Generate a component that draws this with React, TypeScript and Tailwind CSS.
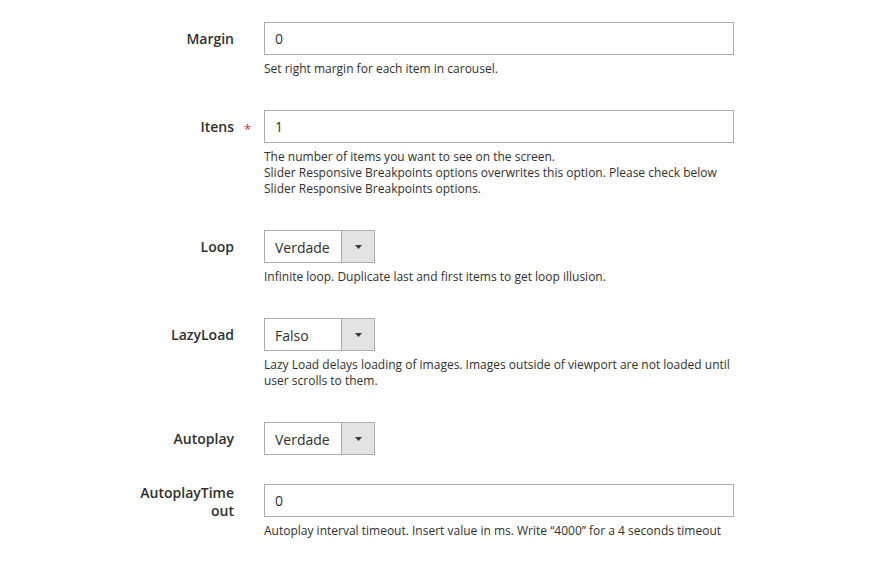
import React from 'react';

type Row = {
  label: string;
  required?: boolean;
  wrapLabel?: boolean;
  kind: 'input' | 'select';
  value: string;
  note?: string[];
};

const rows: Row[] = [
  { label: 'Margin', kind: 'input', value: '0', note: ['Set right margin for each item in carousel.'] },
  {
    label: 'Itens',
    required: true,
    kind: 'input',
    value: '1',
    note: [
      'The number of items you want to see on the screen.',
      'Slider Responsive Breakpoints options overwrites this option. Please check below',
      'Slider Responsive Breakpoints options.',
    ],
  },
  { label: 'Loop', kind: 'select', value: 'Verdade', note: ['Infinite loop. Duplicate last and first items to get loop illusion.'] },
  {
    label: 'LazyLoad',
    kind: 'select',
    value: 'Falso',
    note: [
      'Lazy Load delays loading of images. Images outside of viewport are not loaded until',
      'user scrolls to them.',
    ],
  },
  { label: 'Autoplay', kind: 'select', value: 'Verdade' },
  {
    label: 'AutoplayTimeout',
    wrapLabel: true,
    kind: 'input',
    value: '0',
    note: ['Autoplay interval timeout. Insert value in ms. Write \u201c4000\u201d for a 4 seconds timeout'],
  },
];

function Field({ row }: { row: Row }) {
  return (
    <div className="flex mb-[29px]">
      <div className="w-[264px] shrink-0 flex justify-end">
        <div
          className={
            'w-[100px] text-right font-semibold text-[14px] leading-[18px] text-[#303030] ' +
            (row.wrapLabel ? 'pt-0' : 'pt-[8px]')
          }
        >
          {row.wrapLabel ? (
            <>
              AutoplayTime
              <br />
              out
            </>
          ) : (
            row.label
          )}
        </div>
        <div className="w-[30px] pl-[10px] pt-[11px] text-[13px] leading-[16px] text-[#e22626]">
          {row.required ? '*' : ''}
        </div>
      </div>
      <div className="flex flex-col">
        {row.kind === 'input' ? (
          <div className="w-[470px] h-[33px] border border-[#adadad] bg-white flex items-center pl-[10px] text-[14px] text-[#303030]">
            {row.value}
          </div>
        ) : (
          <div className="w-[111px] h-[33px] border border-[#adadad] bg-white flex text-[14px] text-[#303030]">
            <div className="flex-1 flex items-center pl-[10px] pt-[1px]">{row.value}</div>
            <div className="w-[33px] border-l border-[#adadad] bg-[#e3e3e3] flex items-center justify-center">
              <svg width="7" height="4" viewBox="0 0 7 4">
                <path d="M0 0 H7 L3.5 4 Z" fill="#41362f" />
              </svg>
            </div>
          </div>
        )}
        {row.note && (
          <div className="mt-[6px] mb-[4px] text-[12px] leading-[16px] text-[#303030]">
            {row.note.map((l, i) => (
              <div key={i} className="whitespace-nowrap">
                {l}
              </div>
            ))}
          </div>
        )}
      </div>
    </div>
  );
}

export default function App() {
  return (
    <div
      className="w-[892px] h-[563px] bg-white pt-[22px] overflow-hidden"
      style={{ fontFamily: '"Open Sans", "Liberation Sans", sans-serif' }}
    >
      {rows.map((r) => (
        <Field key={r.label} row={r} />
      ))}
    </div>
  );
}
